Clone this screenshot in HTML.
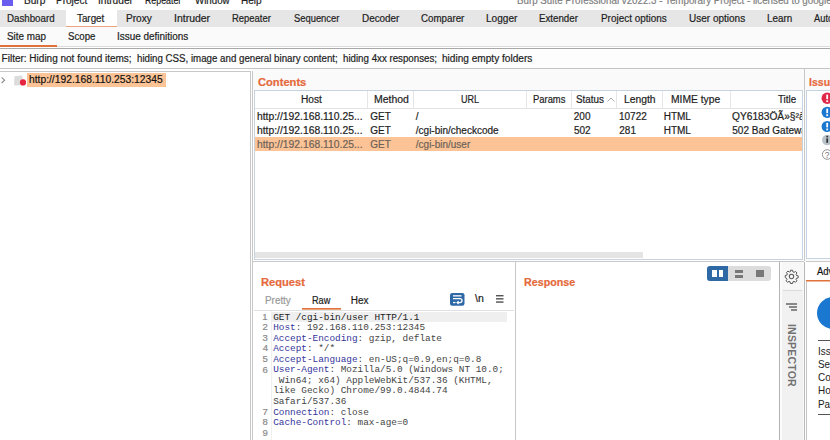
<!DOCTYPE html>
<html><head><meta charset="utf-8">
<style>
*{margin:0;padding:0;box-sizing:border-box}
html,body{width:830px;height:440px;overflow:hidden;background:#fff;font-family:"Liberation Sans",sans-serif;color:#1e1e1e;font-size:10px;position:relative}
.a{position:absolute;white-space:nowrap}
.t{position:absolute;white-space:nowrap;line-height:1;transform-origin:0 0;-webkit-text-stroke:0.2px currentColor}
.m{-webkit-text-stroke:0}
.k{color:#34349a}
</style></head><body>
<div class="a" style="left:2px;top:0px;width:11px;height:6px;background:#6b5cf0;"></div>
<div class="t" style="left:24.19px;top:-5.29px;font-size:10.5px;color:#222;transform:scaleX(0.9619);">Burp</div>
<div class="t" style="left:55.70px;top:-5.29px;font-size:10.5px;color:#222;transform:scaleX(0.9555);">Project</div>
<div class="t" style="left:97.69px;top:-5.29px;font-size:10.5px;color:#222;transform:scaleX(0.9638);">Intruder</div>
<div class="t" style="left:145.30px;top:-5.29px;font-size:10.5px;color:#222;transform:scaleX(0.8387);">Repeater</div>
<div class="t" style="left:195.00px;top:-5.29px;font-size:10.5px;color:#222;transform:scaleX(0.9256);">Window</div>
<div class="t" style="left:240.50px;top:-5.29px;font-size:10.5px;color:#222;transform:scaleX(0.9524);">Help</div>
<div class="t" style="left:517.02px;top:-5.29px;font-size:10.5px;color:#808080;transform:scaleX(0.9300);">Burp Suite Professional v2022.3 - Temporary Project - licensed to google</div>
<div class="a" style="left:0px;top:10px;width:830px;height:17px;background:#e6e6e6;"></div>
<div class="a" style="left:66px;top:10px;width:51px;height:17px;background:#fff;"></div>
<div class="a" style="left:66px;top:27px;width:51px;height:1px;background:#e0703c;"></div>
<div class="a" style="left:66px;top:26px;width:51px;height:1px;background:#eca47e;"></div>
<div class="t" style="left:7.02px;top:13.93px;font-size:10px;color:#1e1e1e;transform:scaleX(0.9726);">Dashboard</div>
<div class="t" style="left:76.80px;top:13.93px;font-size:10px;color:#1e1e1e;transform:scaleX(0.9818);">Target</div>
<div class="t" style="left:126.19px;top:13.93px;font-size:10px;color:#1e1e1e;transform:scaleX(1.0081);">Proxy</div>
<div class="t" style="left:173.86px;top:13.93px;font-size:10px;color:#1e1e1e;transform:scaleX(1.0479);">Intruder</div>
<div class="t" style="left:231.94px;top:13.93px;font-size:10px;color:#1e1e1e;transform:scaleX(0.9453);">Repeater</div>
<div class="t" style="left:293.53px;top:13.93px;font-size:10px;color:#1e1e1e;transform:scaleX(0.9371);">Sequencer</div>
<div class="t" style="left:361.71px;top:13.93px;font-size:10px;color:#1e1e1e;transform:scaleX(0.9892);">Decoder</div>
<div class="t" style="left:421.31px;top:13.93px;font-size:10px;color:#1e1e1e;transform:scaleX(0.9749);">Comparer</div>
<div class="t" style="left:486.19px;top:13.93px;font-size:10px;color:#1e1e1e;transform:scaleX(1.0099);">Logger</div>
<div class="t" style="left:539.22px;top:13.93px;font-size:10px;color:#1e1e1e;transform:scaleX(0.9719);">Extender</div>
<div class="t" style="left:600.81px;top:13.93px;font-size:10px;color:#1e1e1e;transform:scaleX(0.9923);">Project options</div>
<div class="t" style="left:689.00px;top:13.93px;font-size:10px;color:#1e1e1e;">User options</div>
<div class="t" style="left:766.51px;top:13.93px;font-size:10px;color:#1e1e1e;transform:scaleX(0.9834);">Learn</div>
<div class="t" style="left:813.60px;top:13.93px;font-size:10px;color:#1e1e1e;transform:scaleX(0.93);">Auto</div>
<div class="a" style="left:0px;top:27px;width:830px;height:20px;background:#fafafa;"></div>
<div class="t" style="left:6.71px;top:31.83px;font-size:10px;color:#1e1e1e;transform:scaleX(0.9870);">Site map</div>
<div class="t" style="left:67.52px;top:31.83px;font-size:10px;color:#1e1e1e;transform:scaleX(0.9672);">Scope</div>
<div class="t" style="left:116.71px;top:31.83px;font-size:10px;color:#1e1e1e;transform:scaleX(0.9929);">Issue definitions</div>
<div class="a" style="left:0px;top:45px;width:57px;height:2px;background:#e0703c;"></div>
<div class="a" style="left:57px;top:46px;width:773px;height:1px;background:#dcdcdc;"></div>
<div class="a" style="left:0px;top:47px;width:830px;height:1px;background:#fff;"></div>
<div class="a" style="left:0px;top:48px;width:830px;height:1px;background:#a8a8a8;"></div>
<div class="a" style="left:0px;top:49px;width:830px;height:19px;background:#fdfdfd;"></div>
<div class="t" style="left:1.60px;top:53.53px;font-size:10px;color:#1e1e1e;">Filter: Hiding not found items;</div>
<div class="t" style="left:137.32px;top:53.53px;font-size:10px;color:#1e1e1e;transform:scaleX(0.9708);">hiding CSS, image and general binary content;</div>
<div class="t" style="left:343.32px;top:53.53px;font-size:10px;color:#1e1e1e;transform:scaleX(0.9716);">hiding 4xx responses;</div>
<div class="t" style="left:442.29px;top:53.53px;font-size:10px;color:#1e1e1e;transform:scaleX(1.0090);">hiding empty folders</div>
<div class="a" style="left:0px;top:68px;width:830px;height:1px;background:#c4c4c4;"></div>
<div class="a" style="left:0px;top:71px;width:251px;height:369px;background:#fff;border-top:1px solid #c8c8c8;border-right:1px solid #c8c8c8"></div>
<svg class="a" style="left:0;top:74px" width="28" height="14" viewBox="0 0 28 14"><path d="M1.6 3.4 L4.6 6.2 L1.6 9" stroke="#8a8a8a" stroke-width="1.1" fill="none"/><path d="M14.5 2.2 L21.5 1.6 L22.5 2.4 L22.5 11.2 L15 11.6 L14 10.8 Z" fill="#dcdcdc"/><circle cx="23" cy="8.4" r="3.1" fill="#e5233e"/></svg>
<div class="a" style="left:27px;top:73px;width:139px;height:14px;background:#fcc496;"></div>
<div class="t" style="left:28.58px;top:74.26px;font-size:10.8px;color:#111;transform:scaleX(0.9525);">http://192.168.110.253:12345</div>
<div class="a" style="left:252px;top:71px;width:1px;height:369px;background:#c8c8c8;"></div>
<div class="a" style="left:253px;top:69px;width:551px;height:21px;background:#fafafa;"></div>
<div class="t" style="left:258.05px;top:76.81px;font-size:10.5px;font-weight:bold;color:#e5693a;transform:scaleX(1.0619);">Contents</div>
<div class="a" style="left:254px;top:90px;width:549px;height:170px;background:#fff;border:1px solid #c8d3e0"></div>
<div class="a" style="left:255px;top:91px;width:547px;height:167px;overflow:hidden;">
<div class="a" style="left:0px;top:17px;width:547px;height:1px;background:#e3e3e3;"></div>
<div class="a" style="left:112px;top:0px;width:1px;height:17px;background:#e6e6e6;"></div>
<div class="a" style="left:158px;top:0px;width:1px;height:17px;background:#e6e6e6;"></div>
<div class="a" style="left:271px;top:0px;width:1px;height:17px;background:#e6e6e6;"></div>
<div class="a" style="left:316px;top:0px;width:1px;height:17px;background:#e6e6e6;"></div>
<div class="a" style="left:361px;top:0px;width:1px;height:17px;background:#e6e6e6;"></div>
<div class="a" style="left:407px;top:0px;width:1px;height:17px;background:#e6e6e6;"></div>
<div class="a" style="left:475px;top:0px;width:1px;height:17px;background:#e6e6e6;"></div>
<div class="t" style="left:46.19px;top:4.03px;font-size:10px;color:#1e1e1e;transform:scaleX(1.0152);">Host</div>
<div class="t" style="left:118.76px;top:4.03px;font-size:10px;color:#1e1e1e;transform:scaleX(1.0470);">Method</div>
<div class="t" style="left:205.88px;top:4.03px;font-size:10px;color:#1e1e1e;transform:scaleX(0.9043);">URL</div>
<div class="t" style="left:278.25px;top:4.03px;font-size:10px;color:#1e1e1e;transform:scaleX(0.9399);">Params</div>
<div class="t" style="left:320.91px;top:4.03px;font-size:10px;color:#1e1e1e;transform:scaleX(0.9854);">Status</div>
<div class="t" style="left:369.18px;top:4.03px;font-size:10px;color:#1e1e1e;transform:scaleX(1.0309);">Length</div>
<div class="t" style="left:416.48px;top:4.03px;font-size:10px;color:#1e1e1e;transform:scaleX(1.0301);">MIME type</div>
<div class="t" style="left:523.30px;top:4.03px;font-size:10px;color:#1e1e1e;transform:scaleX(0.9777);">Title</div>
<svg class="a" style="left:352px;top:6px" width="8" height="5" viewBox="0 0 8 5"><path d="M0.5 4.5 L4 1 L7.5 4.5" stroke="#a0a0a0" stroke-width="0.9" fill="none"/></svg>
<div class="a" style="left:0px;top:46px;width:547px;height:14px;background:#fcc496;"></div>
<div class="t" style="left:2.10px;top:20.53px;font-size:10px;color:#1e1e1e;transform:scaleX(1.034);">http://192.168.110.25...</div>
<div class="t" style="left:115.30px;top:20.53px;font-size:10px;color:#1e1e1e;">GET</div>
<div class="t" style="left:160.80px;top:20.53px;font-size:10px;color:#1e1e1e;">/</div>
<div class="t" style="left:318.80px;top:20.53px;font-size:10px;color:#1e1e1e;">200</div>
<div class="t" style="left:364.00px;top:20.53px;font-size:10px;color:#1e1e1e;">10722</div>
<div class="t" style="left:408.70px;top:20.53px;font-size:10px;color:#1e1e1e;">HTML</div>
<div class="t" style="left:477.20px;top:20.53px;font-size:10px;color:#1e1e1e;transform:scaleX(1.02);">QY6183&Ouml;&Atilde;&raquo;&sect;&sup2;&agrave;&#x20ac;</div>
<div class="t" style="left:2.10px;top:34.53px;font-size:10px;color:#1e1e1e;transform:scaleX(1.034);">http://192.168.110.25...</div>
<div class="t" style="left:115.30px;top:34.53px;font-size:10px;color:#1e1e1e;">GET</div>
<div class="t" style="left:160.80px;top:34.53px;font-size:10px;color:#1e1e1e;">/cgi-bin/checkcode</div>
<div class="t" style="left:318.90px;top:34.53px;font-size:10px;color:#1e1e1e;">502</div>
<div class="t" style="left:364.30px;top:34.53px;font-size:10px;color:#1e1e1e;">281</div>
<div class="t" style="left:408.70px;top:34.53px;font-size:10px;color:#1e1e1e;">HTML</div>
<div class="t" style="left:477.30px;top:34.53px;font-size:10px;color:#1e1e1e;">502 Bad Gateway</div>
<div class="t" style="left:2.10px;top:48.53px;font-size:10px;color:#6e6258;transform:scaleX(1.034);">http://192.168.110.25...</div>
<div class="t" style="left:115.30px;top:48.53px;font-size:10px;color:#6e6258;">GET</div>
<div class="t" style="left:160.80px;top:48.53px;font-size:10px;color:#6e6258;">/cgi-bin/user</div>
<div class="a" style="left:0px;top:161px;width:388px;height:7px;background:#e4e4e4;"></div>
</div>
<div class="a" style="left:804px;top:69px;width:1px;height:192px;background:#c8c8c8;"></div>
<div class="a" style="left:805px;top:69px;width:25px;height:192px;background:#fafafa;"></div>
<div class="t" style="left:809.06px;top:77.11px;font-size:10.5px;font-weight:bold;color:#e5693a;">Issues</div>
<div class="a" style="left:806px;top:90px;width:30px;height:169px;background:#fff;border:1px solid #c5d3e3"></div>
<svg class="a" style="left:815px;top:90px" width="20" height="80" viewBox="0 0 20 80"><circle cx="12.2" cy="8.3" r="5.7" fill="#e0294a"/><rect x="11.3" y="4.6" width="1.8" height="4.6" fill="#fff"/><rect x="11.3" y="10.3" width="1.8" height="1.8" fill="#fff"/><circle cx="12.2" cy="22.3" r="5.6" fill="#1a78d0"/><rect x="11.3" y="18.6" width="1.8" height="4.6" fill="#fff"/><rect x="11.3" y="24.3" width="1.8" height="1.8" fill="#fff"/><circle cx="12.2" cy="36.5" r="5.6" fill="#1a78d0"/><rect x="11.3" y="32.8" width="1.8" height="4.6" fill="#fff"/><rect x="11.3" y="38.5" width="1.8" height="1.8" fill="#fff"/><circle cx="12.2" cy="50" r="5.2" fill="#b9c4ca"/><rect x="11.3" y="48.4" width="1.8" height="4.4" fill="#333"/><rect x="11.3" y="45.8" width="1.8" height="1.6" fill="#333"/><circle cx="12.2" cy="64.5" r="4.8" fill="#fff" stroke="#888" stroke-width="0.9"/><text x="12.2" y="67.6" font-size="8.5" text-anchor="middle" fill="#777" font-family="Liberation Sans">?</text></svg>
<div class="a" style="left:253px;top:261px;width:551px;height:1px;background:#c8c8c8;"></div>
<div class="a" style="left:806px;top:261px;width:24px;height:1px;background:#c8c8c8;"></div>
<div class="a" style="left:253px;top:262px;width:262px;height:178px;background:#fff;"></div>
<div class="a" style="left:252px;top:262px;width:1px;height:178px;background:#c8c8c8;"></div>
<div class="t" style="left:261.22px;top:276.71px;font-size:10.5px;font-weight:bold;color:#e5693a;transform:scaleX(1.0585);">Request</div>
<div class="t" style="left:265.01px;top:295.73px;font-size:10px;color:#999;transform:scaleX(0.9881);">Pretty</div>
<div class="t" style="left:311.77px;top:295.73px;font-size:10px;color:#1e1e1e;transform:scaleX(0.9167);">Raw</div>
<div class="t" style="left:350.70px;top:295.73px;font-size:10px;color:#1e1e1e;">Hex</div>
<div class="a" style="left:302px;top:308px;width:39px;height:1px;background:#e0703c;"></div>
<div class="a" style="left:302px;top:309px;width:39px;height:1px;background:#eca47e;"></div>
<svg class="a" style="left:450px;top:293px" width="15" height="13" viewBox="0 0 15 13"><rect x="0" y="0" width="14.5" height="12.7" rx="2.2" fill="#2e69a6"/><rect x="3" y="2.2" width="8.5" height="1.3" fill="#fff"/><path d="M3 5.6 H10 A2 2 0 0 1 10 9.6 H7.5" stroke="#fff" stroke-width="1.3" fill="none"/><path d="M8.6 8.2 L7 9.6 L8.6 11" stroke="#fff" stroke-width="1.1" fill="none"/><rect x="3" y="8.9" width="2.5" height="1.3" fill="#fff"/></svg>
<div class="t" style="left:474.90px;top:293.83px;font-size:10px;color:#222;transform:scaleX(1.0519);">\n</div>
<svg class="a" style="left:495px;top:293px" width="10" height="12" viewBox="0 0 10 12"><rect x="1" y="2.1" width="7.5" height="1.3" fill="#444"/><rect x="1" y="5.2" width="7.5" height="1.3" fill="#444"/><rect x="1" y="8.4" width="7.5" height="1.3" fill="#444"/></svg>
<div class="a" style="left:254px;top:310px;width:260px;height:1px;background:#e0e0e0;"></div>
<div class="a" style="left:271px;top:311px;width:1px;height:129px;background:#f0f0f0;"></div>
<div class="a" style="left:271px;top:312px;width:236px;height:10px;background:#efefef;"></div>
<div class="t" style="left:262.24px;top:311.76px;font-size:9.5px;color:#8a8a8a;">1</div>
<div class="t" style="left:273.2px;top:312.61px;font-family:'Liberation Mono',monospace;font-size:9.38px;color:#444;-webkit-text-stroke:0"><span style="color:#222">GET /cgi-bin/user HTTP/1.1</span></div>
<div class="t" style="left:262.52px;top:322.31px;font-size:9.5px;color:#8a8a8a;">2</div>
<div class="t" style="left:273.2px;top:323.16px;font-family:'Liberation Mono',monospace;font-size:9.38px;color:#444;-webkit-text-stroke:0"><span class="k">Host</span>: 192.168.110.253:12345</div>
<div class="t" style="left:262.62px;top:332.86px;font-size:9.5px;color:#8a8a8a;">3</div>
<div class="t" style="left:273.2px;top:333.71px;font-family:'Liberation Mono',monospace;font-size:9.38px;color:#444;-webkit-text-stroke:0"><span class="k">Accept-Encoding</span>: gzip, deflate</div>
<div class="t" style="left:262.81px;top:343.41px;font-size:9.5px;color:#8a8a8a;">4</div>
<div class="t" style="left:273.2px;top:344.26px;font-family:'Liberation Mono',monospace;font-size:9.38px;color:#444;-webkit-text-stroke:0"><span class="k">Accept</span>: */*</div>
<div class="t" style="left:262.62px;top:353.96px;font-size:9.5px;color:#8a8a8a;">5</div>
<div class="t" style="left:273.2px;top:354.81px;font-family:'Liberation Mono',monospace;font-size:9.38px;color:#444;-webkit-text-stroke:0"><span class="k">Accept-Language</span>: en-US;q=0.9,en;q=0.8</div>
<div class="t" style="left:262.52px;top:364.51px;font-size:9.5px;color:#8a8a8a;">6</div>
<div class="t" style="left:273.2px;top:365.36px;font-family:'Liberation Mono',monospace;font-size:9.38px;color:#444;-webkit-text-stroke:0"><span class="k">User-Agent</span>: Mozilla/5.0 (Windows NT 10.0;</div>
<div class="t" style="left:273.2px;top:375.91px;font-family:'Liberation Mono',monospace;font-size:9.38px;color:#444;-webkit-text-stroke:0">&nbsp;Win64; x64) AppleWebKit/537.36 (KHTML,</div>
<div class="t" style="left:273.2px;top:386.46px;font-family:'Liberation Mono',monospace;font-size:9.38px;color:#444;-webkit-text-stroke:0">like Gecko) Chrome/99.0.4844.74</div>
<div class="t" style="left:273.2px;top:397.01px;font-family:'Liberation Mono',monospace;font-size:9.38px;color:#444;-webkit-text-stroke:0">Safari/537.36</div>
<div class="t" style="left:262.52px;top:406.71px;font-size:9.5px;color:#8a8a8a;">7</div>
<div class="t" style="left:273.2px;top:407.56px;font-family:'Liberation Mono',monospace;font-size:9.38px;color:#444;-webkit-text-stroke:0"><span class="k">Connection</span>: close</div>
<div class="t" style="left:262.62px;top:417.26px;font-size:9.5px;color:#8a8a8a;">8</div>
<div class="t" style="left:273.2px;top:418.11px;font-family:'Liberation Mono',monospace;font-size:9.38px;color:#444;-webkit-text-stroke:0"><span class="k">Cache-Control</span>: max-age=0</div>
<div class="t" style="left:262.52px;top:427.81px;font-size:9.5px;color:#8a8a8a;">9</div>
<div class="a" style="left:515px;top:262px;width:1px;height:178px;background:#c8c8c8;"></div>
<div class="a" style="left:516px;top:262px;width:264px;height:178px;background:#fff;"></div>
<div class="t" style="left:524.25px;top:276.71px;font-size:10.5px;font-weight:bold;color:#e5693a;transform:scaleX(1.0197);">Response</div>
<div class="a" style="left:707px;top:266px;width:64px;height:15px;background:#dcdcdc;border-radius:3px"></div>
<div class="a" style="left:707px;top:266px;width:21px;height:15px;background:#2e69a6;border-radius:3px 0 0 3px"></div>
<div class="a" style="left:712px;top:270px;width:5px;height:7px;background:#fff;"></div>
<div class="a" style="left:718.5px;top:270px;width:4.5px;height:7px;background:#fff;"></div>
<div class="a" style="left:734.5px;top:270px;width:8.5px;height:3px;background:#777;"></div>
<div class="a" style="left:734.5px;top:274.5px;width:8.5px;height:3px;background:#777;"></div>
<div class="a" style="left:756px;top:270px;width:8px;height:7px;background:#777;"></div>
<div class="a" style="left:779px;top:262px;width:1px;height:178px;background:#b4b4b4;"></div>
<div class="a" style="left:780px;top:262px;width:23px;height:178px;background:#f2f1f2;"></div>
<div class="a" style="left:780px;top:262px;width:2px;height:178px;background:#fbfbfb;"></div>
<div class="a" style="left:782px;top:262px;width:21px;height:28px;background:#f7f7f7;"></div>
<div class="a" style="left:783px;top:290px;width:19px;height:1px;background:#dadada;"></div>
<svg class="a" style="left:784px;top:269px" width="15" height="15" viewBox="0 0 24 24"><path fill="none" stroke="#555" stroke-width="1.7" d="M12 8.5a3.5 3.5 0 1 0 0 7a3.5 3.5 0 1 0 0-7z"/><path fill="none" stroke="#555" stroke-width="1.6" d="M10.3 2h3.4l.5 2.6 1.9.8 2.2-1.5 2.4 2.4-1.5 2.2.8 1.9 2.6.5v3.4l-2.6.5-.8 1.9 1.5 2.2-2.4 2.4-2.2-1.5-1.9.8-.5 2.6h-3.4l-.5-2.6-1.9-.8-2.2 1.5-2.4-2.4 1.5-2.2-.8-1.9L2 13.7v-3.4l2.6-.5.8-1.9-1.5-2.2 2.4-2.4 2.2 1.5 1.9-.8z"/></svg>
<div class="a" style="left:786px;top:303px;width:11px;height:1.5px;background:#888;"></div>
<div class="a" style="left:788.5px;top:306px;width:8.5px;height:1.5px;background:#888;"></div>
<div class="a" style="left:791px;top:309px;width:6px;height:1.5px;background:#888;"></div>
<div class="t" style="left:797px;top:323.5px;transform-origin:0 0;transform:rotate(90deg);font-weight:bold;font-size:10.5px;color:#727272;letter-spacing:0.2px;-webkit-text-stroke:0">INSPECTOR</div>
<div class="a" style="left:803px;top:262px;width:1px;height:178px;background:#fafafa;"></div>
<div class="a" style="left:804px;top:262px;width:1px;height:178px;background:#b8b8b8;"></div>
<div class="a" style="left:805px;top:262px;width:1px;height:178px;background:#fff;"></div>
<div class="a" style="left:806px;top:282px;width:1px;height:158px;background:#c4c4c4;"></div>
<div class="a" style="left:807px;top:262px;width:23px;height:178px;background:#fff;"></div>
<div class="t" style="left:816.90px;top:265.89px;font-size:11px;color:#111;transform:scaleX(0.8600);">Advisory</div>
<div class="a" style="left:806px;top:280px;width:24px;height:1px;background:#e0703c;"></div>
<div class="a" style="left:806px;top:281px;width:24px;height:1px;background:#f0b898;"></div>
<div class="a" style="left:817px;top:297px;width:32px;height:32px;border-radius:50%;background:#1a78d0"></div>
<div class="a" style="left:818px;top:340px;width:12px;height:1.2px;background:#555;"></div>
<div class="t" style="left:817.71px;top:345.89px;font-size:11px;color:#222;transform:scaleX(0.9000);-webkit-text-stroke:0;">Issue</div>
<div class="t" style="left:818.11px;top:359.09px;font-size:11px;color:#222;transform:scaleX(0.9000);-webkit-text-stroke:0;">Severity</div>
<div class="t" style="left:818.11px;top:372.29px;font-size:11px;color:#222;transform:scaleX(0.9000);-webkit-text-stroke:0;">Confidence</div>
<div class="t" style="left:817.81px;top:385.49px;font-size:11px;color:#222;transform:scaleX(0.9000);-webkit-text-stroke:0;">Host</div>
<div class="t" style="left:817.81px;top:398.69px;font-size:11px;color:#222;transform:scaleX(0.9000);-webkit-text-stroke:0;">Path</div>
<div class="a" style="left:818px;top:414px;width:12px;height:1.2px;background:#555;"></div>
</body></html>
